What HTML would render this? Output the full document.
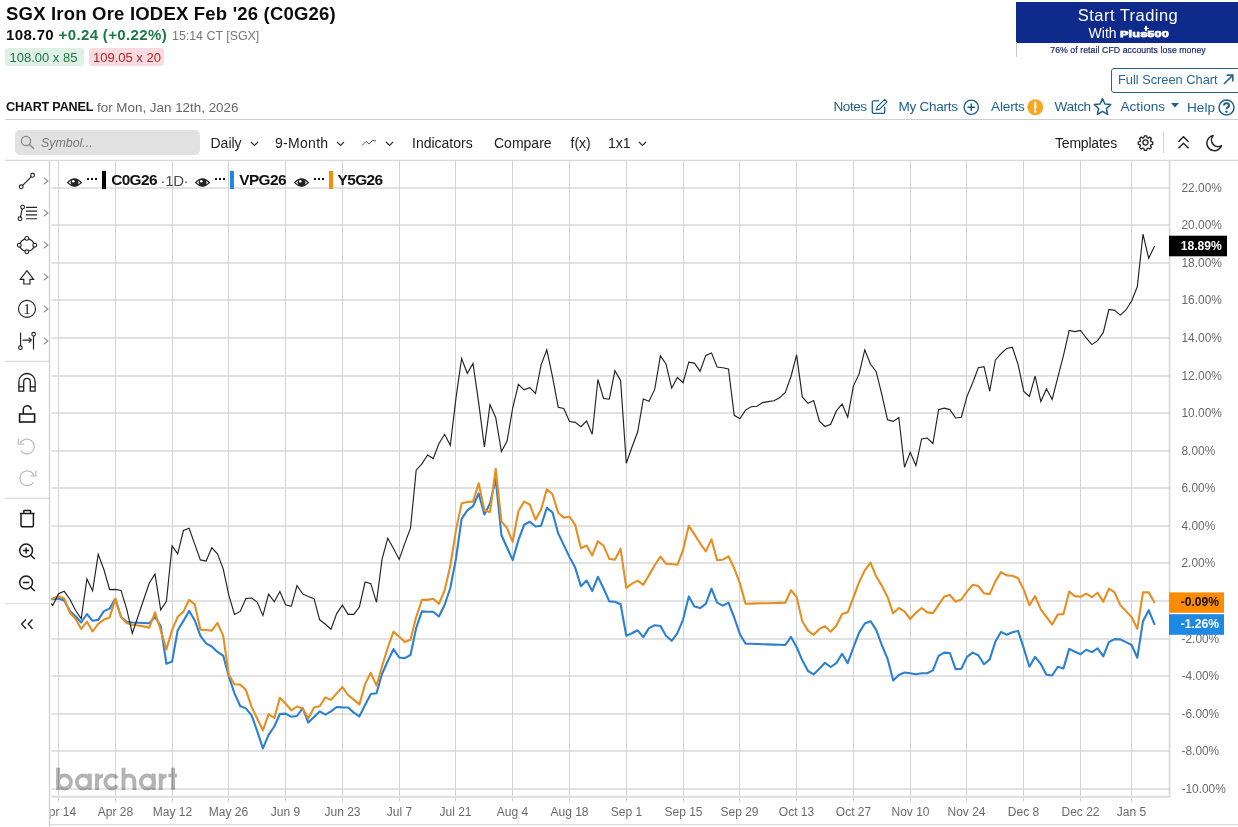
<!DOCTYPE html>
<html><head><meta charset="utf-8"><title>SGX Iron Ore IODEX Feb '26 (C0G26)</title>
<style>
*{box-sizing:border-box;margin:0;padding:0}
html,body{width:1238px;height:827px;overflow:hidden;background:#fff}
body{font-family:"Liberation Sans",sans-serif;color:#111;position:relative}
.a{position:absolute;white-space:nowrap;line-height:1}
#chart{position:absolute;left:0;top:0}
.lnk{color:#1f5f8c;font-size:13.6px}
.tb{font-size:14px;color:#222}
svg{overflow:visible}
#wrap{position:absolute;left:0;top:0;width:1238px;height:827px;opacity:0.9999;will-change:opacity}
</style></head><body><div id="wrap">
<svg id="chart" width="1238" height="827" viewBox="0 0 1238 827">
<defs><clipPath id="cp"><rect x="51" y="161" width="1118" height="635"/></clipPath></defs>
<g stroke="#e2e2e2" stroke-width="2" shape-rendering="auto"><line x1="51.5" x2="1169" y1="789.0" y2="789.0"/><line x1="51.5" x2="1169" y1="751.0" y2="751.0"/><line x1="51.5" x2="1169" y1="714.0" y2="714.0"/><line x1="51.5" x2="1169" y1="676.0" y2="676.0"/><line x1="51.5" x2="1169" y1="639.0" y2="639.0"/><line x1="51.5" x2="1169" y1="601.0" y2="601.0"/><line x1="51.5" x2="1169" y1="563.0" y2="563.0"/><line x1="51.5" x2="1169" y1="526.0" y2="526.0"/><line x1="51.5" x2="1169" y1="488.0" y2="488.0"/><line x1="51.5" x2="1169" y1="451.0" y2="451.0"/><line x1="51.5" x2="1169" y1="413.0" y2="413.0"/><line x1="51.5" x2="1169" y1="376.0" y2="376.0"/><line x1="51.5" x2="1169" y1="338.0" y2="338.0"/><line x1="51.5" x2="1169" y1="300.0" y2="300.0"/><line x1="51.5" x2="1169" y1="263.0" y2="263.0"/><line x1="51.5" x2="1169" y1="225.0" y2="225.0"/><line x1="51.5" x2="1169" y1="188.0" y2="188.0"/></g>
<g stroke="#d3d3d3" stroke-width="1"><line x1="58.5" x2="58.5" y1="161" y2="801.5"/><line x1="115.5" x2="115.5" y1="161" y2="801.5"/><line x1="172.5" x2="172.5" y1="161" y2="801.5"/><line x1="228.5" x2="228.5" y1="161" y2="801.5"/><line x1="285.5" x2="285.5" y1="161" y2="801.5"/><line x1="342.5" x2="342.5" y1="161" y2="801.5"/><line x1="399.5" x2="399.5" y1="161" y2="801.5"/><line x1="455.5" x2="455.5" y1="161" y2="801.5"/><line x1="512.5" x2="512.5" y1="161" y2="801.5"/><line x1="569.5" x2="569.5" y1="161" y2="801.5"/><line x1="626.5" x2="626.5" y1="161" y2="801.5"/><line x1="683.5" x2="683.5" y1="161" y2="801.5"/><line x1="739.5" x2="739.5" y1="161" y2="801.5"/><line x1="796.5" x2="796.5" y1="161" y2="801.5"/><line x1="853.5" x2="853.5" y1="161" y2="801.5"/><line x1="910.5" x2="910.5" y1="161" y2="801.5"/><line x1="966.5" x2="966.5" y1="161" y2="801.5"/><line x1="1023.5" x2="1023.5" y1="161" y2="801.5"/><line x1="1080.5" x2="1080.5" y1="161" y2="801.5"/><line x1="1131.5" x2="1131.5" y1="161" y2="801.5"/></g>
<g stroke="#cfcfcf" stroke-width="1.3" fill="none">
<line x1="5" x2="1238" y1="160.4" y2="160.4" stroke="#d8d8d8" stroke-width="1.2"/>
<line x1="49.5" x2="49.5" y1="161" y2="827"/>
<line x1="1169.6" x2="1169.6" y1="161" y2="797" stroke="#d9d9d9" stroke-width="1.7"/>
<line x1="51.5" x2="1170" y1="796.8" y2="796.8" stroke="#dedede" stroke-width="2"/>
<line x1="50" x2="1238" y1="824.6" y2="824.6" stroke="#dcdcdc" stroke-width="1.2"/>
</g>
<g clip-path="url(#cp)" fill="none" stroke-linejoin="round" stroke-linecap="round">
<polyline stroke="#2c80d2" stroke-width="2.1" points="51.4,599.3 58.5,598.5 64.2,600.6 69.9,611.1 75.5,616.2 81.2,622.5 86.9,614.0 92.6,620.8 98.2,619.9 103.9,611.1 109.6,608.6 115.3,598.9 121.0,617.0 126.6,621.8 132.3,622.5 138.0,622.8 143.7,623.0 149.3,623.3 155.0,617.0 160.7,626.0 166.4,663.8 172.1,661.6 177.7,630.2 183.4,620.9 189.1,610.9 194.8,620.5 200.4,635.9 206.1,643.4 211.8,646.5 217.5,651.9 223.2,655.6 228.8,676.4 234.5,693.4 240.2,706.0 245.9,708.4 251.6,715.4 257.2,731.1 262.9,748.4 268.6,734.8 274.3,726.5 279.9,714.0 285.6,713.6 291.3,716.8 297.0,716.0 302.7,708.2 308.3,722.6 314.0,717.0 319.7,711.4 325.4,714.6 331.0,711.4 336.7,707.0 342.4,707.4 348.1,707.5 353.8,712.6 359.4,716.3 365.1,705.1 370.8,694.0 376.5,693.2 382.1,673.7 387.8,661.0 393.5,649.2 399.2,657.5 404.9,658.2 410.5,655.0 416.2,627.9 421.9,611.4 427.6,611.7 433.2,611.7 438.9,616.5 444.6,605.0 450.3,588.0 456.0,558.5 461.6,518.9 467.3,510.4 473.0,506.2 478.7,493.4 484.4,514.6 490.0,503.6 495.7,479.0 501.4,535.0 507.1,547.7 512.7,560.1 518.4,540.1 524.1,524.8 529.8,521.8 535.5,526.5 541.1,525.7 546.8,507.9 552.5,512.3 558.2,533.4 563.8,545.1 569.5,556.9 575.2,567.6 580.9,586.2 586.6,580.6 592.2,591.1 597.9,576.8 603.6,588.5 609.3,601.4 614.9,601.8 620.6,604.3 626.3,635.7 632.0,633.2 637.7,630.3 643.3,637.1 649.0,628.1 654.7,625.2 660.4,626.0 666.0,635.7 671.7,640.8 677.4,633.2 683.1,619.6 688.8,596.4 694.4,606.5 700.1,608.1 705.8,603.8 711.5,588.7 717.1,602.6 722.8,605.7 728.5,602.6 734.2,617.5 739.9,634.2 745.5,643.6 751.2,643.8 756.9,644.0 762.6,644.2 768.2,644.4 773.9,644.6 779.6,644.8 785.3,645.0 791.0,636.9 796.6,647.0 802.3,660.3 808.0,671.0 813.7,674.3 819.4,668.7 825.0,662.8 830.7,667.0 836.4,663.1 842.1,653.8 847.7,663.1 853.4,647.5 859.1,632.6 864.8,623.5 870.5,621.2 876.1,629.7 881.8,645.0 887.5,658.6 893.2,680.6 898.8,675.0 904.5,672.5 910.2,673.3 915.9,674.3 921.6,673.3 927.2,673.3 932.9,670.4 938.6,655.9 944.3,652.6 949.9,653.0 955.6,669.1 961.3,668.7 967.0,656.9 972.7,652.6 978.3,655.2 984.0,664.2 989.7,659.4 995.4,641.6 1001.0,631.9 1006.7,634.8 1012.4,632.3 1018.1,630.9 1023.8,648.4 1029.4,666.7 1035.1,656.9 1040.8,664.0 1046.5,674.7 1052.2,675.5 1057.8,666.7 1063.5,668.4 1069.2,648.9 1074.9,651.8 1080.5,654.3 1086.2,649.7 1091.9,652.1 1097.6,648.4 1103.3,656.4 1108.9,642.2 1114.6,639.1 1120.3,639.4 1126.0,642.1 1131.6,645.0 1137.3,657.7 1143.0,621.2 1148.7,610.2 1154.4,624.1"/>
<polyline stroke="#e58f22" stroke-width="2.1" points="51.4,598.9 58.5,596.2 64.2,598.4 69.9,612.8 75.5,618.7 81.2,628.9 86.9,621.6 92.6,631.5 98.2,623.8 103.9,619.6 109.6,617.6 115.3,598.9 121.0,617.0 126.6,623.0 132.3,624.7 138.0,625.5 143.7,626.4 149.3,627.6 155.0,612.3 160.7,630.3 166.4,649.4 172.1,629.9 177.7,616.8 183.4,611.8 189.1,599.9 194.8,604.4 200.4,629.6 206.1,630.0 211.8,630.6 217.5,622.8 223.2,635.8 228.8,674.8 234.5,684.2 240.2,684.6 245.9,689.8 251.6,706.9 257.2,718.5 262.9,730.4 268.6,714.1 274.3,718.0 279.9,697.7 285.6,703.8 291.3,710.3 297.0,706.5 302.7,708.6 308.3,718.4 314.0,707.6 319.7,706.2 325.4,697.4 331.0,699.9 336.7,693.4 342.4,687.0 348.1,695.2 353.8,699.6 359.4,704.4 365.1,684.1 370.8,672.8 376.5,685.7 382.1,666.0 387.8,647.5 393.5,631.6 399.2,636.7 404.9,641.9 410.5,639.7 416.2,616.8 421.9,599.9 427.6,599.9 433.2,598.7 438.9,603.8 444.6,590.5 450.3,566.0 456.0,529.9 461.6,503.6 467.3,501.9 473.0,501.6 478.7,483.3 484.4,510.4 490.0,512.1 495.7,468.8 501.4,521.4 507.1,528.2 512.7,541.8 518.4,511.2 524.1,501.6 529.8,504.5 535.5,519.7 541.1,509.6 546.8,489.2 552.5,494.3 558.2,512.8 563.8,517.6 569.5,516.7 575.2,525.0 580.9,548.3 586.6,545.5 592.2,555.5 597.9,541.2 603.6,545.8 609.3,558.9 614.9,559.7 620.6,548.7 626.3,587.9 632.0,583.6 637.7,580.6 643.3,584.8 649.0,575.1 654.7,565.3 660.4,556.5 666.0,563.6 671.7,564.0 677.4,564.8 683.1,550.0 688.8,525.8 694.4,534.4 700.1,543.3 705.8,551.4 711.5,539.4 717.1,560.2 722.8,559.7 728.5,556.3 734.2,568.3 739.9,583.1 745.5,603.7 751.2,603.6 756.9,603.4 762.6,603.3 768.2,603.2 773.9,603.0 779.6,602.9 785.3,602.8 791.0,590.2 796.6,597.0 802.3,621.2 808.0,630.6 813.7,634.8 819.4,628.9 825.0,626.3 830.7,631.8 836.4,625.5 842.1,614.0 847.7,612.3 853.4,597.5 859.1,582.2 864.8,570.4 870.5,562.7 876.1,576.3 881.8,585.6 887.5,597.0 893.2,613.3 898.8,608.0 904.5,611.4 910.2,619.0 915.9,612.8 921.6,608.0 927.2,612.4 932.9,613.1 938.6,604.9 944.3,596.6 949.9,595.0 955.6,601.7 961.3,599.5 967.0,591.6 972.7,584.8 978.3,586.0 984.0,593.3 989.7,594.1 995.4,581.4 1001.0,572.1 1006.7,575.4 1012.4,575.8 1018.1,578.3 1023.8,589.9 1029.4,605.1 1035.1,596.1 1040.8,609.4 1046.5,617.0 1052.2,624.6 1057.8,614.5 1063.5,614.1 1069.2,591.6 1074.9,596.1 1080.5,596.8 1086.2,593.6 1091.9,597.2 1097.6,592.7 1103.3,601.6 1108.9,588.7 1114.6,592.4 1120.3,605.1 1126.0,611.1 1131.6,617.0 1137.3,628.9 1143.0,592.4 1148.7,592.4 1154.4,602.2"/>
<polyline stroke="#222" stroke-width="1.15" stroke-linejoin="miter" points="51.4,603.8 52.8,605.5 58.5,593.8 64.2,591.3 69.9,599.2 75.5,610.3 81.2,618.7 86.9,578.9 92.6,590.8 98.2,554.3 103.9,569.5 109.6,589.6 115.3,589.4 121.0,590.4 126.6,608.6 132.3,633.5 138.0,616.5 143.7,599.5 149.3,583.0 155.0,574.1 160.7,609.9 166.4,601.4 172.1,545.8 177.7,553.9 183.4,530.5 189.1,528.3 194.8,544.4 200.4,559.9 206.1,561.1 211.8,547.8 217.5,553.9 223.2,568.9 228.8,595.2 234.5,614.4 240.2,611.4 245.9,598.6 251.6,598.0 257.2,602.1 262.9,615.6 268.6,594.1 274.3,601.8 279.9,591.5 285.6,604.7 291.3,606.4 297.0,585.5 302.7,593.9 308.3,596.5 314.0,598.7 319.7,619.8 325.4,624.2 331.0,629.3 336.7,613.6 342.4,605.1 348.1,614.3 353.8,614.3 359.4,607.0 365.1,582.0 370.8,583.7 376.5,602.3 382.1,558.9 387.8,538.2 393.5,548.4 399.2,559.4 404.9,543.1 410.5,528.2 416.2,470.2 421.9,463.8 427.6,455.0 433.2,458.6 438.9,443.7 444.6,434.3 450.3,445.3 456.0,397.9 461.6,358.5 467.3,373.3 473.0,363.4 478.7,402.9 484.4,447.0 490.0,404.6 495.7,417.4 501.4,451.6 507.1,441.1 512.7,408.0 518.4,384.3 524.1,389.9 529.8,387.7 535.5,393.3 541.1,364.8 546.8,349.8 552.5,376.6 558.2,407.2 563.8,408.4 569.5,421.6 575.2,422.4 580.9,426.7 586.6,421.1 592.2,434.3 597.9,379.5 603.6,398.4 609.3,399.2 614.9,370.7 620.6,380.4 626.3,463.2 632.0,447.0 637.7,431.8 643.3,399.0 649.0,401.2 654.7,389.4 660.4,355.8 666.0,363.9 671.7,388.2 677.4,377.5 683.1,382.6 688.8,362.2 694.4,363.1 700.1,371.2 705.8,355.4 711.5,352.9 717.1,367.0 722.8,367.7 728.5,369.0 734.2,415.3 739.9,418.7 745.5,410.1 751.2,406.8 756.9,406.3 762.6,402.6 768.2,401.6 773.9,400.7 779.6,397.8 785.3,392.5 791.0,376.5 796.6,354.8 802.3,396.9 808.0,403.3 813.7,400.6 819.4,421.1 825.0,426.5 830.7,424.3 836.4,410.9 842.1,404.0 847.7,417.2 853.4,386.1 859.1,373.9 864.8,349.8 870.5,364.3 876.1,371.4 881.8,394.3 887.5,419.7 893.2,421.4 898.8,417.5 904.5,467.2 910.2,452.3 915.9,465.5 921.6,438.9 927.2,438.0 932.9,443.5 938.6,409.6 944.3,408.2 949.9,409.6 955.6,418.0 961.3,417.2 967.0,396.4 972.7,382.8 978.3,367.7 984.0,366.7 989.7,391.2 995.4,359.9 1001.0,353.6 1006.7,348.5 1012.4,347.2 1018.1,364.6 1023.8,391.4 1029.4,396.5 1035.1,376.2 1040.8,401.4 1046.5,388.9 1052.2,399.4 1057.8,377.4 1063.5,355.3 1069.2,330.4 1074.9,331.6 1080.5,330.4 1086.2,338.0 1091.9,344.6 1097.6,340.6 1103.3,332.4 1108.9,309.5 1114.6,310.4 1120.3,315.1 1126.0,310.0 1131.6,301.0 1137.3,286.8 1143.0,234.1 1148.7,258.3 1154.4,246.4"/>
</g>
<g font-family="Liberation Sans, sans-serif" font-size="11.9" fill="#6a6a6a" text-anchor="start"><text x="1181.5" y="793.1">-10.00%</text><text x="1181.5" y="755.1">-8.00%</text><text x="1181.5" y="718.1">-6.00%</text><text x="1181.5" y="680.1">-4.00%</text><text x="1181.5" y="643.1">-2.00%</text><text x="1181.5" y="605.1">0.00%</text><text x="1181.5" y="567.1">2.00%</text><text x="1181.5" y="530.1">4.00%</text><text x="1181.5" y="492.1">6.00%</text><text x="1181.5" y="455.1">8.00%</text><text x="1181.5" y="417.1">10.00%</text><text x="1181.5" y="380.1">12.00%</text><text x="1181.5" y="342.1">14.00%</text><text x="1181.5" y="304.1">16.00%</text><text x="1181.5" y="267.1">18.00%</text><text x="1181.5" y="229.1">20.00%</text><text x="1181.5" y="192.1">22.00%</text></g>
<g clip-path="url(#cpx)" font-family="Liberation Sans, sans-serif" font-size="12" fill="#6a6a6a" text-anchor="middle">
<defs><clipPath id="cpx"><rect x="50.5" y="800" width="1188" height="27"/></clipPath></defs><text x="58.5" y="816">Apr 14</text><text x="115.5" y="816">Apr 28</text><text x="172.5" y="816">May 12</text><text x="228.5" y="816">May 26</text><text x="285.5" y="816">Jun 9</text><text x="342.5" y="816">Jun 23</text><text x="399.5" y="816">Jul 7</text><text x="455.5" y="816">Jul 21</text><text x="512.5" y="816">Aug 4</text><text x="569.5" y="816">Aug 18</text><text x="626.5" y="816">Sep 1</text><text x="683.5" y="816">Sep 15</text><text x="739.5" y="816">Sep 29</text><text x="796.5" y="816">Oct 13</text><text x="853.5" y="816">Oct 27</text><text x="910.5" y="816">Nov 10</text><text x="966.5" y="816">Nov 24</text><text x="1023.5" y="816">Dec 8</text><text x="1080.5" y="816">Dec 22</text><text x="1131.5" y="816">Jan 5</text></g>
<g font-family="Liberation Sans, sans-serif" font-size="12.1" font-weight="bold" text-anchor="start">
<rect x="1169" y="235.7" width="58" height="20.6" fill="#000"/><text x="1180.8" y="250.3" fill="#fff">18.89%</text>
<rect x="1169" y="592.4" width="55" height="20.4" fill="#fb8c00"/><text x="1180.7" y="606" fill="#111">-0.09%</text>
<rect x="1169" y="614.2" width="55" height="20.6" fill="#1e88e5"/><text x="1180.7" y="627.9" fill="#fff">-1.26%</text>
</g>
<g fill="none" stroke="#000" opacity="0.3" stroke-width="3.9">
<path d="M58.1 767.7 V789.9"/><circle cx="64.45" cy="781.95" r="6.5"/>
<circle cx="83.35" cy="781.95" r="6.5"/><path d="M89.8 773.6 V789.9"/>
<path d="M97 773.6 V789.9 M97 782.2 A6.3 6.3 0 0 1 103 775.8"/>
<path d="M117.17 778.22 A6.5 6.5 0 1 0 117.17 785.68"/>
<path d="M123.5 767.7 V789.9 M123.5 781 A5.45 5.45 0 0 1 134.4 781 V789.9"/>
<circle cx="147.35" cy="781.95" r="6.5"/><path d="M153.7 773.6 V789.9"/>
<path d="M160.7 773.6 V789.9 M160.7 782.2 A6.3 6.3 0 0 1 166.5 775.8"/>
<path d="M173.1 767.7 V789.9"/><path d="M168.3 775.55 H177" stroke-width="3.5"/>
</g>
</svg>
<!-- header -->
<div class="a" style="left:6px;top:4.6px;font-size:18.5px;font-weight:bold;color:#0b0b0b;letter-spacing:0.2px">SGX Iron Ore IODEX Feb '26 (C0G26)</div>
<div class="a" style="left:6px;top:27.1px;font-size:15px;font-weight:bold;color:#0b0b0b;letter-spacing:0.36px">108.70 <span style="color:#1b7a45">+0.24 (+0.22%)</span></div>
<div class="a" style="left:172px;top:29.6px;font-size:12.4px;color:#777">15:14 CT [SGX]</div>
<div class="a" style="left:5px;top:48.2px;width:79px;height:17.6px;background:#e1f0e7;border-radius:3px"></div>
<div class="a" style="left:9.5px;top:51px;font-size:13px;color:#1b7a45">108.00 x 85</div>
<div class="a" style="left:89px;top:48.2px;width:75px;height:17.6px;background:#f9dcdf;border-radius:3px"></div>
<div class="a" style="left:93px;top:51px;font-size:13px;color:#b8222f">109.05 x 20</div>

<!-- ad -->
<div class="a" style="left:1016px;top:2px;width:222px;height:40.5px;background:#0e2a8a"></div>
<div class="a" style="left:1016px;top:42px;width:1px;height:15px;background:#c9c9c9"></div>
<div class="a" style="left:1016px;top:6.5px;width:224px;text-align:center;font-size:16.5px;color:#fff;letter-spacing:0.45px">Start Trading</div>
<div class="a" style="left:1088.6px;top:25.5px;font-size:14px;color:#fff">With</div>
<div class="a" style="left:1119.8px;top:28.7px;font-size:9.7px;font-weight:bold;color:#fff;-webkit-text-stroke:0.75px #fff;transform:scaleX(1.31);transform-origin:left top;letter-spacing:0.1px">Plus500</div>
<div class="a" style="left:1143.8px;top:27.6px;width:4.8px;height:1.7px;background:#fff"></div><div class="a" style="left:1145.35px;top:26px;width:1.7px;height:4.8px;background:#fff"></div>
<div class="a" style="left:1016px;top:45.5px;width:224px;text-align:center;font-size:8.7px;color:#1c2a6b;letter-spacing:0.08px;-webkit-text-stroke:0.2px #1c2a6b">76% of retail CFD accounts lose money</div>

<!-- full screen -->
<div class="a" style="left:1111px;top:68px;width:140px;height:24.5px;border:1.5px solid #23628f;border-radius:3px;background:#fff"></div>
<div class="a" style="left:1118px;top:73.5px;font-size:12.8px;color:#2a6594">Full Screen Chart</div>
<svg class="a" style="left:1223px;top:74px" width="11" height="11" viewBox="0 0 11 11"><path d="M1 10 L9.3 1.7 M3.6 1.2 H9.8 V7.4" fill="none" stroke="#2a6594" stroke-width="1.7"/></svg>

<!-- chart panel row -->
<div class="a" style="left:6px;top:100.8px;font-size:12.6px;font-weight:bold;color:#111;letter-spacing:-0.2px">CHART PANEL</div>
<div class="a" style="left:97px;top:100.6px;font-size:13.4px;color:#666">for Mon, Jan 12th, 2026</div>
<div class="a" style="left:5px;top:118.5px;width:1233px;height:1.4px;background:#cfcfcf"></div>

<div class="a lnk" style="left:833.5px;top:100px;letter-spacing:-0.47px">Notes</div>
<svg class="a" style="left:871px;top:98px" width="17" height="17" viewBox="0 0 17 17"><path d="M8 2.8 H2.6 Q1.3 2.8 1.3 4.1 V14 Q1.3 15.3 2.6 15.3 H12.4 Q13.7 15.3 13.7 14 V8.8" fill="none" stroke="#1f5f8c" stroke-width="1.3"/><path d="M6.2 8.8 L13.6 1.4 L16 3.8 L8.6 11.2 L5.6 11.8 Z" fill="#fff" stroke="#1f5f8c" stroke-width="1.2" stroke-linejoin="round"/></svg>
<div class="a lnk" style="left:898.5px;top:100px;letter-spacing:-0.3px">My Charts</div>
<svg class="a" style="left:962.5px;top:98.5px" width="16.5" height="16.5" viewBox="0 0 17 17"><circle cx="8.5" cy="8.5" r="7.4" fill="none" stroke="#1f5f8c" stroke-width="1.4"/><path d="M8.5 4.6 V12.4 M4.6 8.5 H12.4" stroke="#1f5f8c" stroke-width="1.5"/></svg>
<div class="a lnk" style="left:991px;top:100px;letter-spacing:-0.17px">Alerts</div>
<svg class="a" style="left:1027px;top:98.5px" width="16.5" height="16.5" viewBox="0 0 17 17"><circle cx="8.5" cy="8.5" r="8.2" fill="#f5a623"/><path d="M8.5 3.6 V9.8" stroke="#fff" stroke-width="2.2" stroke-linecap="round"/><circle cx="8.5" cy="12.9" r="1.3" fill="#fff"/></svg>
<div class="a lnk" style="left:1054.5px;top:100px;letter-spacing:-0.34px">Watch</div>
<svg class="a" style="left:1092.5px;top:96.5px" width="19" height="19" viewBox="0 0 19 19"><path d="M9.5 1.6 L11.9 7 L17.7 7.6 L13.4 11.5 L14.6 17.3 L9.5 14.3 L4.4 17.3 L5.6 11.5 L1.3 7.6 L7.1 7 Z" fill="none" stroke="#1f5f8c" stroke-width="1.5" stroke-linejoin="round"/></svg>
<div class="a lnk" style="left:1120.5px;top:100px">Actions</div>
<svg class="a" style="left:1171px;top:102.5px" width="8" height="5" viewBox="0 0 8 5"><path d="M0 0 H8 L4 4.6 Z" fill="#1f5f8c"/></svg>
<div class="a lnk" style="left:1187px;top:101px">Help</div>
<svg class="a" style="left:1218px;top:98.5px" width="17" height="17" viewBox="0 0 17 17"><circle cx="8.5" cy="8.5" r="7.5" fill="none" stroke="#1f5f8c" stroke-width="1.5"/><path d="M6 6.6 Q6 4.3 8.5 4.3 Q11 4.3 11 6.4 Q11 7.7 9.6 8.4 Q8.5 9 8.5 10.3" fill="none" stroke="#1f5f8c" stroke-width="2"/><circle cx="8.5" cy="12.7" r="1.2" fill="#1f5f8c"/></svg>

<!-- toolbar -->
<div class="a" style="left:15px;top:130px;width:185px;height:24.5px;background:#e1e1e1;border-radius:5px"></div>
<svg class="a" style="left:20px;top:135px" width="15" height="15" viewBox="0 0 15 15"><circle cx="6" cy="6" r="4.6" fill="none" stroke="#888" stroke-width="1.3"/><path d="M9.4 9.4 L13.6 13.6" stroke="#888" stroke-width="1.4" stroke-linecap="round"/></svg>
<div class="a" style="left:41px;top:136.5px;font-size:12.4px;font-style:italic;color:#777">Symbol...</div>
<div class="a tb" style="left:210.5px;top:136px">Daily</div>
<svg class="a" style="left:250px;top:140.5px" width="9" height="6" viewBox="0 0 9 6"><path d="M1 1 L4.5 4.5 L8 1" fill="none" stroke="#333" stroke-width="1.2"/></svg>
<div class="a tb" style="left:275px;top:136px;letter-spacing:0.3px">9-Month</div>
<svg class="a" style="left:336px;top:140.5px" width="9" height="6" viewBox="0 0 9 6"><path d="M1 1 L4.5 4.5 L8 1" fill="none" stroke="#333" stroke-width="1.2"/></svg>
<svg class="a" style="left:361px;top:138px" width="16" height="10" viewBox="0 0 16 10"><path d="M1 7.5 L5 3.5 L8.2 6 L11.5 2.4 L15 3" fill="none" stroke="#555" stroke-width="1"/></svg>
<svg class="a" style="left:384.5px;top:140.5px" width="9" height="6" viewBox="0 0 9 6"><path d="M1 1 L4.5 4.5 L8 1" fill="none" stroke="#333" stroke-width="1.2"/></svg>
<div class="a tb" style="left:412px;top:136px">Indicators</div>
<div class="a tb" style="left:494px;top:136px">Compare</div>
<div class="a tb" style="left:570.5px;top:136px">f(x)</div>
<div class="a tb" style="left:608px;top:136px">1x1</div>
<svg class="a" style="left:638px;top:140.5px" width="9" height="6" viewBox="0 0 9 6"><path d="M1 1 L4.5 4.5 L8 1" fill="none" stroke="#333" stroke-width="1.2"/></svg>
<div class="a tb" style="left:1055px;top:136px;letter-spacing:-0.2px">Templates</div>
<svg class="a" style="left:1136.5px;top:134px" width="17" height="17" viewBox="0 0 24 24"><path d="M12 8.4a3.6 3.6 0 1 0 0 7.2 3.600 3.600 0 0 0 0-7.200z M10.300 2.500h3.400l.5 2.600 1.700.7 2.200-1.500 2.400 2.400-1.500 2.200.7 1.700 2.600.5v3.400l-2.600.5-.7 1.700 1.500 2.200-2.400 2.400-2.200-1.500-1.700.7-.5 2.600h-3.400l-.5-2.600-1.700-.7-2.200 1.500-2.400-2.400 1.500-2.200-.7-1.700-2.600-.5v-3.400l2.600-.5.700-1.700-1.500-2.200 2.400-2.400 2.200 1.500 1.700-.7z" fill="none" stroke="#222" stroke-width="1.8" stroke-linejoin="round"/></svg>
<div class="a" style="left:1163px;top:131.5px;width:1px;height:21.5px;background:#d0d0d0"></div>
<svg class="a" style="left:1176.500px;top:135px" width="13" height="15" viewBox="0 0 13 15"><path d="M1.500 6.800 L6.500 1.800 L11.500 6.800 M1.500 13.200 L6.500 8.200 L11.500 13.200" fill="none" stroke="#222" stroke-width="1.5"/></svg>
<svg class="a" style="left:1205px;top:133.5px" width="18" height="18" viewBox="0 0 18 18"><path d="M8.200 1.600 A7.600 7.600 0 1 0 16.600 11.600 A6.600 6.600 0 0 1 8.200 1.600 Z" fill="none" stroke="#222" stroke-width="1.5" stroke-linejoin="round"/></svg>

<!-- legend -->
<svg class="a" style="left:67px;top:176.5px" width="15" height="11" viewBox="0 0 15 11"><path d="M0.6 5.6 Q7.5 -1.8 14.4 5.6 Q7.5 12.6 0.6 5.600 Z" fill="none" stroke="#222" stroke-width="1.300"/><circle cx="7.600" cy="5.600" r="3.900" fill="#222"/><circle cx="6.300" cy="4.300" r="1.300" fill="#fff"/></svg><div class="a" style="left:87px;top:177.8px;width:10px;height:2px"><i style="position:absolute;left:0;top:0;width:2px;height:2px;background:#111"></i><i style="position:absolute;left:4px;top:0;width:2px;height:2px;background:#111"></i><i style="position:absolute;left:8px;top:0;width:2px;height:2px;background:#111"></i></div><div class="a" style="left:101.6px;top:170.800px;width:4.200px;height:17.800px;background:#000"></div><div class="a" style="left:111.2px;top:172.300px;font-size:15.400px;font-weight:bold;color:#111;letter-spacing:-0.62px">C0G26</div><div class="a" style="left:160.500px;top:173px;font-size:15px;color:#4a4a4a;letter-spacing:-0.35px">&middot;1D&middot;</div><svg class="a" style="left:195.3px;top:176.5px" width="15" height="11" viewBox="0 0 15 11"><path d="M0.6 5.6 Q7.5 -1.8 14.4 5.6 Q7.5 12.6 0.6 5.600 Z" fill="none" stroke="#222" stroke-width="1.300"/><circle cx="7.600" cy="5.600" r="3.900" fill="#222"/><circle cx="6.300" cy="4.300" r="1.300" fill="#fff"/></svg><div class="a" style="left:215px;top:177.8px;width:10px;height:2px"><i style="position:absolute;left:0;top:0;width:2px;height:2px;background:#111"></i><i style="position:absolute;left:4px;top:0;width:2px;height:2px;background:#111"></i><i style="position:absolute;left:8px;top:0;width:2px;height:2px;background:#111"></i></div><div class="a" style="left:230.2px;top:170.800px;width:4.200px;height:17.800px;background:#1e88e5"></div><div class="a" style="left:239.3px;top:172.300px;font-size:15.400px;font-weight:bold;color:#111;letter-spacing:-0.62px">VPG26</div><svg class="a" style="left:293.8px;top:176.5px" width="15" height="11" viewBox="0 0 15 11"><path d="M0.6 5.6 Q7.5 -1.8 14.4 5.6 Q7.5 12.6 0.6 5.600 Z" fill="none" stroke="#222" stroke-width="1.300"/><circle cx="7.600" cy="5.600" r="3.900" fill="#222"/><circle cx="6.300" cy="4.300" r="1.300" fill="#fff"/></svg><div class="a" style="left:313.6px;top:177.8px;width:10px;height:2px"><i style="position:absolute;left:0;top:0;width:2px;height:2px;background:#111"></i><i style="position:absolute;left:4px;top:0;width:2px;height:2px;background:#111"></i><i style="position:absolute;left:8px;top:0;width:2px;height:2px;background:#111"></i></div><div class="a" style="left:328.7px;top:170.800px;width:4.200px;height:17.800px;background:#fb8c00"></div><div class="a" style="left:337.6px;top:172.300px;font-size:15.400px;font-weight:bold;color:#111;letter-spacing:-0.62px">Y5G26</div>
<!-- left tools -->
<svg class="a" style="left:0;top:0" width="50" height="827" viewBox="0 0 50 827">
<g fill="none" stroke="#222" stroke-width="1.150">
<path d="M21.200 186.800 L32.600 175.300"/><circle cx="21.200" cy="186.800" r="1.900" fill="#fff" stroke="#222" stroke-width="1.100"/><circle cx="32.600" cy="175.300" r="1.900" fill="#fff" stroke="#222" stroke-width="1.100"/>
<path d="M22.600 207.100 L20 218.800 M26 207.300 H37 M26 211.100 H37 M26 214.900 H37 M26 218.700 H37"/><circle cx="22.600" cy="207.100" r="1.900" fill="#fff" stroke="#222" stroke-width="1.100"/><circle cx="20" cy="218.800" r="1.900" fill="#fff" stroke="#222" stroke-width="1.100"/>
<path d="M19.300 245.200 Q20.500 240 26.800 238.400 Q33.500 240 34.700 245.200 Q33.500 250.300 26.800 251.800 Q20.500 250.300 19.300 245.200 Z"/>
<circle cx="26.800" cy="238.400" r="1.900" fill="#fff" stroke="#222" stroke-width="1.100"/><circle cx="19.300" cy="245.200" r="1.900" fill="#fff" stroke="#222" stroke-width="1.100"/><circle cx="34.700" cy="245.200" r="1.900" fill="#fff" stroke="#222" stroke-width="1.100"/><circle cx="26.800" cy="251.800" r="1.900" fill="#fff" stroke="#222" stroke-width="1.100"/>
<path d="M26.900 270.600 L33.600 279.300 H30 V284 H23.800 V279.300 H20.200 Z" stroke-linejoin="miter"/>
<circle cx="27" cy="308.900" r="8.500"/>
<path d="M20.600 332.400 V346 M22.600 340.100 H31 M33.500 336 V349.500"/><path d="M28.600 337.600 L31.400 340.100 L28.600 342.600" /><circle cx="20.400" cy="347.700" r="1.800" fill="#fff" stroke="#222" stroke-width="1.100"/><circle cx="33.600" cy="334.200" r="1.800" fill="#fff" stroke="#222" stroke-width="1.100"/>
</g>
<text x="27" y="313.900" text-anchor="middle" font-family="Liberation Serif, serif" font-size="15" fill="#222">1</text>
<g stroke="#dcdcdc" stroke-width="1.200"><path d="M5 361.400 H49 M5 498.300 H49 M5 603.500 H49"/></g>
<g fill="none" stroke="#1a1a1a" stroke-width="1.500">
<path d="M18.900 391.200 V381.600 A8.100 8.100 0 0 1 35.100 381.600 V391.200 H30.300 V381.600 A3.300 3.300 0 0 0 23.700 381.600 V391.200 Z M18.900 386.800 H23.700 M30.300 386.800 H35.100" stroke-width="1.300"/>
<rect x="19.600" y="414" width="15" height="8" stroke-width="1.600"/><path d="M23.300 414 V410 A4 4 0 0 1 31.300 409.600" />
<path d="M19.800 513.600 H34.600 M23.800 513.400 V511 Q23.800 510.400 24.600 510.400 H29.800 Q30.600 510.400 30.600 511 V513.400 M21 513.600 V525 Q21 526.800 22.800 526.800 H31.600 Q33.400 526.800 33.400 525 V513.600"/>
<circle cx="26.100" cy="550.500" r="6.400"/><path d="M30.800 555.200 L34.800 559 M23 550.500 H29.200 M26.100 547.400 V553.600"/>
<circle cx="26.100" cy="582.500" r="6.400"/><path d="M30.800 587.200 L34.800 591 M23 582.500 H29.200"/>
<path d="M26 619.400 L21.700 624.100 L26 628.800 M32.500 619.400 L28.200 624.100 L32.500 628.800" stroke-width="1.400"/>
</g>
<g fill="none" stroke="#bdbdbd" stroke-width="1.300">
<path d="M20.200 443.400 A7.400 7.400 0 1 1 20.700 450.600"/><path d="M18.300 438.800 V444.200 H23.700"/>
<path d="M34 475.100 A7.400 7.400 0 1 0 33.500 482.300"/><path d="M35.900 470.500 V475.900 H30.500"/>
</g>
</svg><svg class="a" style="left:42.500px;top:177px" width="6" height="8" viewBox="0 0 6 8"><path d="M0.800 0.600 L4.800 4 L0.800 7.400" fill="none" stroke="#8a8a8a" stroke-width="1.1"/></svg><svg class="a" style="left:42.500px;top:209.1px" width="6" height="8" viewBox="0 0 6 8"><path d="M0.800 0.600 L4.800 4 L0.800 7.400" fill="none" stroke="#8a8a8a" stroke-width="1.1"/></svg><svg class="a" style="left:42.500px;top:241.2px" width="6" height="8" viewBox="0 0 6 8"><path d="M0.800 0.600 L4.800 4 L0.800 7.400" fill="none" stroke="#8a8a8a" stroke-width="1.1"/></svg><svg class="a" style="left:42.500px;top:273px" width="6" height="8" viewBox="0 0 6 8"><path d="M0.800 0.600 L4.800 4 L0.800 7.400" fill="none" stroke="#8a8a8a" stroke-width="1.1"/></svg><svg class="a" style="left:42.500px;top:305.1px" width="6" height="8" viewBox="0 0 6 8"><path d="M0.800 0.600 L4.800 4 L0.800 7.400" fill="none" stroke="#8a8a8a" stroke-width="1.1"/></svg><svg class="a" style="left:42.500px;top:336.8px" width="6" height="8" viewBox="0 0 6 8"><path d="M0.800 0.600 L4.800 4 L0.800 7.400" fill="none" stroke="#8a8a8a" stroke-width="1.1"/></svg>
</div></body></html>
